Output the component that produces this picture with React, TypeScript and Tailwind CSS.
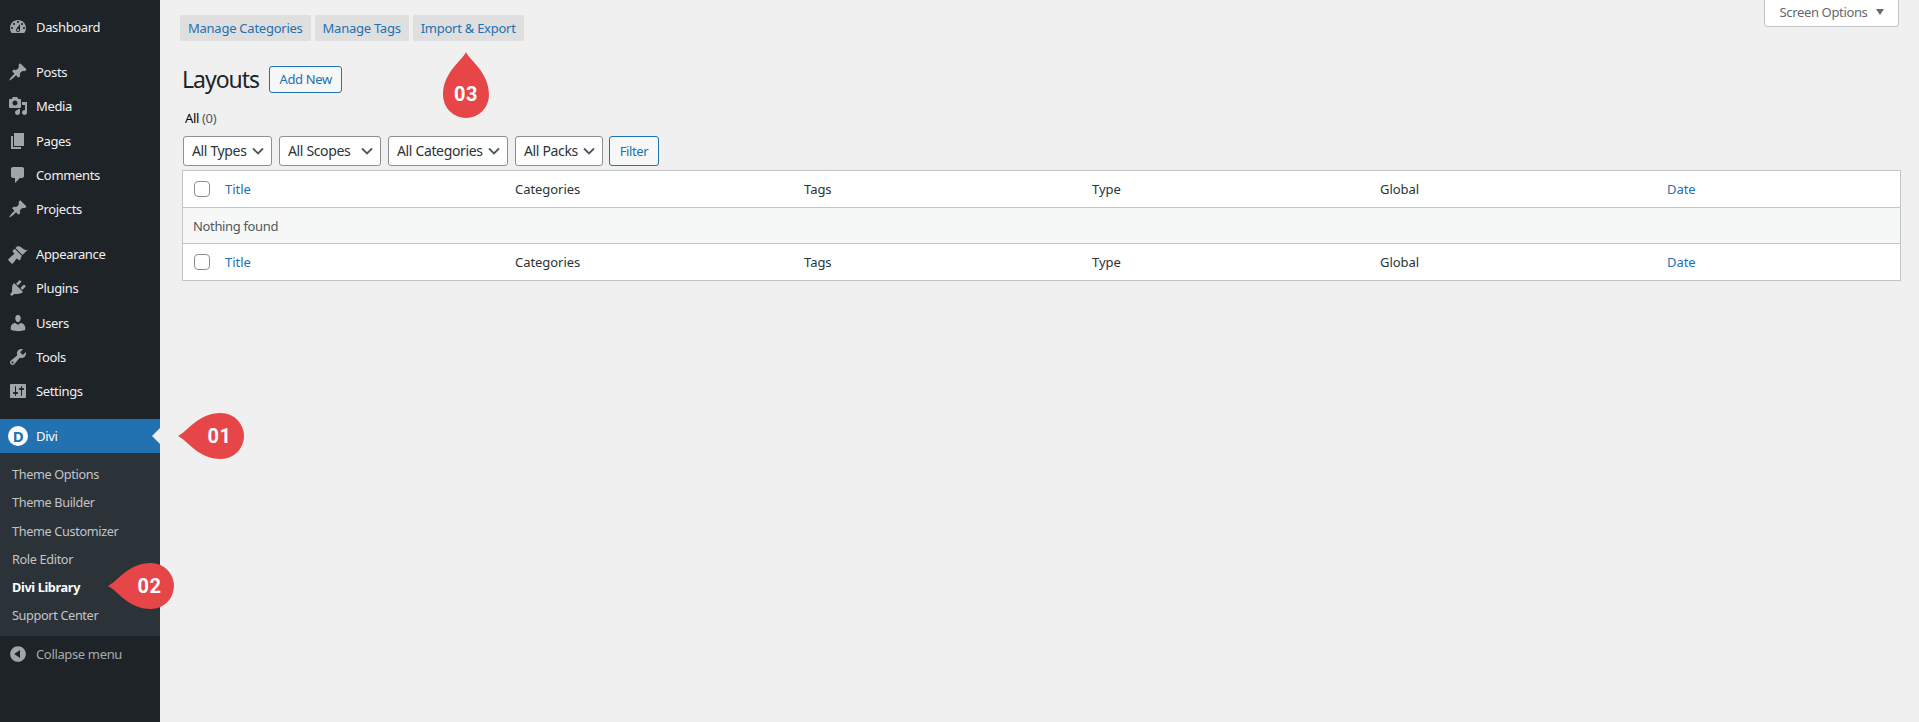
import React from "react";

const P: Record<string, string> = {
  dashboard: "M3.76 16h12.48c1.1-1.37 1.76-3.11 1.76-5 0-4.42-3.58-8-8-8s-8 3.58-8 8c0 1.89.66 3.63 1.76 5zM10 4c.55 0 1 .45 1 1s-.45 1-1 1-1-.45-1-1 .45-1 1-1zM6 6c.55 0 1 .45 1 1s-.45 1-1 1-1-.45-1-1 .45-1 1-1zm8 0c.55 0 1 .45 1 1s-.45 1-1 1-1-.45-1-1 .45-1 1-1zm-5.37 5.55L12 7v6c0 1.1-.9 2-2 2s-2-.9-2-2c0-.57.24-1.08.63-1.45zM4 10c.55 0 1 .45 1 1s-.45 1-1 1-1-.45-1-1 .45-1 1-1zm12 0c.55 0 1 .45 1 1s-.45 1-1 1-1-.45-1-1 .45-1 1-1zm-5 3c0-.55-.45-1-1-1s-1 .45-1 1 .45 1 1 1 1-.45 1-1z",
  post: "M10.44 3.02l1.82-1.82 6.36 6.35-1.83 1.82c-1.05-.68-2.48-.57-3.41.36l-.75.75c-.92.93-1.04 2.35-.35 3.41l-1.83 1.82-2.41-2.41-2.8 2.79c-.42.42-3.38 2.71-3.8 2.29s1.86-3.39 2.28-3.81l2.79-2.79L4.1 9.36l1.83-1.82c1.05.69 2.48.57 3.4-.36l.75-.75c.93-.92 1.05-2.35.36-3.41z",
  media: "M13 11V4c0-.55-.45-1-1-1h-1.67L9 1H5L3.67 3H2c-.55 0-1 .45-1 1v7c0 .55.45 1 1 1h10c.55 0 1-.45 1-1zM7 4.5c1.38 0 2.5 1.12 2.5 2.5S8.38 9.5 7 9.5 4.5 8.38 4.5 7 5.62 4.5 7 4.5zM14 6h5v10.5c0 1.38-1.12 2.5-2.5 2.5S14 17.88 14 16.5s1.12-2.5 2.5-2.5c.17 0 .34.02.5.05V9h-3V6zm-4 8.05V13h2v3.5c0 1.38-1.12 2.5-2.5 2.5S7 17.88 7 16.5 8.12 14 9.5 14c.17 0 .34.02.5.05z",
  page: "M6 15V2h10v13H6zm-1 1h8v2H3V5h2v11z",
  comments: "M5 2h9c1.1 0 2 .9 2 2v7c0 1.1-.9 2-2 2h-2l-5 5v-5H5c-1.1 0-2-.9-2-2V4c0-1.1.9-2 2-2z",
  appearance: "M14.48 11.06L7.41 3.99l1.5-1.5c.5-.56 2.3-.47 3.51.32 1.21.8 1.43 1.28 2.91 2.1 1.18.64 2.45 1.26 4.45.85zm-.71.71L6.7 4.7 4.93 6.47c-.39.39-.39 1.02 0 1.41l1.06 1.06c.39.39.39 1.03 0 1.42-.6.6-1.43 1.11-2.21 1.69-.35.26-.7.53-1.01.84C1.43 13.23 0 15.98 0 15.98 1.48 17.45 4.14 20 4.14 20c.36-.36 1.56-1.6 2.42-2.8.6-.79 1.11-1.62 1.71-2.22.39-.39 1.02-.39 1.41 0l1.06 1.06c.39.39 1.03.39 1.42 0z",
  plugins: "M13.11 4.36L9.87 7.6 8 5.73l3.24-3.24c.35-.34 1.05-.2 1.56.32.52.51.66 1.21.31 1.55zm-8 1.77l.91-1.12 9.01 9.01-1.19.84c-.71.71-2.63 1.16-3.82 1.16H6.14L4.9 17.26c-.59.59-1.54.59-2.12 0-.59-.58-.59-1.53 0-2.12l1.24-1.24v-3.88c0-1.13.4-3.19 1.09-3.89zm7.26 3.97l3.24-3.24c.34-.35 1.04-.21 1.55.31.52.51.66 1.21.31 1.55l-3.24 3.25z",
  users: "M10 9.25c-2.27 0-2.73-3.44-2.73-3.44C7 4.02 7.82 2 9.97 2c2.16 0 2.98 2.02 2.71 3.81 0 0-.41 3.44-2.68 3.44zm0 2.57L12.72 10c2.39 0 4.52 2.33 4.52 4.53v2.49s-3.65 1.13-7.24 1.13c-3.65 0-7.24-1.13-7.24-1.13v-2.49c0-2.25 1.94-4.48 4.47-4.48z",
  tools: "M16.68 9.77c-1.34 1.34-3.3 1.67-4.95.99l-5.41 6.52c-.99.99-2.59.99-3.58 0s-.99-2.59 0-3.57l6.52-5.42c-.68-1.65-.35-3.61.99-4.95 1.28-1.28 3.12-1.62 4.72-1.06l-2.89 2.89 2.82 2.82 2.86-2.87c.53 1.58.18 3.39-1.08 4.65zM3.81 16.21c.4.39 1.04.39 1.43 0 .4-.4.4-1.04 0-1.43-.39-.4-1.03-.4-1.43 0-.39.39-.39 1.03 0 1.43z",
  settings: "M18 16V4c0-.55-.45-1-1-1H3c-.55 0-1 .45-1 1v12c0 .55.45 1 1 1h14c.55 0 1-.45 1-1zM8 11h1c.55 0 1 .45 1 1s-.45 1-1 1H8v1.5c0 .28-.22.5-.5.5s-.5-.22-.5-.5V13H6c-.55 0-1-.45-1-1s.45-1 1-1h1V5.5c0-.28.22-.5.5-.5s.5.22.5.5V11zm5-2h-1c-.55 0-1-.45-1-1s.45-1 1-1h1V5.5c0-.28.22-.5.5-.5s.5.22.5.5V7h1c.55 0 1 .45 1 1s-.45 1-1 1h-1v5.5c0 .28-.22.5-.5.5s-.5-.22-.5-.5V9z",
  collapse: "M10 2.16c4.33 0 7.84 3.51 7.84 7.84s-3.51 7.84-7.84 7.84S2.16 14.33 2.16 10 5.71 2.16 10 2.16zm2 11.72V6.12L6.18 9.97z",
};

function Dashicon({ name }: { name: string }) {
  return (
    <svg viewBox="0 0 20 20" className="w-5 h-5 fill-[#a0a5aa] shrink-0" fillRule="evenodd">
      <path d={P[name]} />
    </svg>
  );
}

function Item({ icon, label }: { icon: string; label: string }) {
  return (
    <div className="h-[34.2px] flex items-center pl-2 gap-2 text-[#f0f0f1]">
      <Dashicon name={icon} />
      <span>{label}</span>
    </div>
  );
}

function Chevron() {
  return (
    <svg viewBox="0 0 16 16" className="w-4 h-4 shrink-0" fill="none" stroke="#50575e" strokeWidth="1.8">
      <path d="M3 5.5l5 5 5-5" />
    </svg>
  );
}

function Select({ label, w }: { label: string; w: string }) {
  return (
    <div className={`${w} h-[30px] bg-white border border-[#8c8f94] rounded-[3px] flex items-center justify-between pl-2 pr-[5px] text-[14px] text-[#2c3338]`}>
      <span>{label}</span>
      <Chevron />
    </div>
  );
}

function Checkbox() {
  return <div className="w-4 h-4 bg-white border border-[#8c8f94] rounded-[4px]" />;
}

function HeadRow({ border }: { border: string }) {
  return (
    <div className={`grid grid-cols-[42px_290px_289px_288px_288px_287px_1fr] items-center bg-white tracking-[-0.05px] ${border}`}>
      <div className="pl-[11px]"><Checkbox /></div>
      <span className="text-[#2271b1]">Title</span>
      <span className="text-[#2c3338]">Categories</span>
      <span className="text-[#2c3338]">Tags</span>
      <span className="text-[#2c3338]">Type</span>
      <span className="text-[#2c3338]">Global</span>
      <span className="text-[#2271b1]">Date</span>
    </div>
  );
}

function Badge({ text, className, up }: { text: string; className: string; up?: boolean }) {
  return (
    <div className={`absolute w-[66px] h-[46px] flex items-center justify-center ${className}`}>
      <svg viewBox="0 0 66 46" className={`absolute inset-0 w-[66px] h-[46px] fill-[#e64647] ${up ? "rotate-90" : ""}`}>
        <path d="M0 23C9 19 20 0 43 0a23 23 0 0 1 0 46C20 46 9 27 0 23Z" />
      </svg>
      <span className={`relative font-bold text-white text-[20px] tracking-[0.6px] font-['Roboto',sans-serif] ${up ? "pt-[18px]" : "pl-[17px]"}`}>{text}</span>
    </div>
  );
}

export default function App() {
  return (
    <div className="relative flex h-[722px] overflow-hidden bg-[#f0f0f0] text-[13px] leading-[18px] font-['Noto_Sans',sans-serif] tracking-[-0.35px]">
      <aside className="w-[160px] shrink-0 bg-[#1d2327] pt-[10px] flex flex-col">
        <Item icon="dashboard" label="Dashboard" />
        <div className="h-[11px]" />
        <Item icon="post" label="Posts" />
        <Item icon="media" label="Media" />
        <Item icon="page" label="Pages" />
        <Item icon="comments" label="Comments" />
        <Item icon="post" label="Projects" />
        <div className="h-[11px]" />
        <Item icon="appearance" label="Appearance" />
        <Item icon="plugins" label="Plugins" />
        <Item icon="users" label="Users" />
        <Item icon="tools" label="Tools" />
        <Item icon="settings" label="Settings" />
        <div className="h-[11px]" />
        <div className="relative h-[34px] bg-[#2271b1] flex items-center pl-2 gap-2 text-white">
          <div className="w-5 h-5 rounded-full bg-white text-[#2271b1] font-bold text-[15px] flex items-center justify-center">D</div>
          <span>Divi</span>
          <div className="absolute right-0 top-[9px] w-0 h-0 border-y-[8px] border-y-transparent border-r-[8px] border-r-[#f0f0f0]" />
        </div>
        <div className="bg-[#2c3338] pt-[7px] pb-[7px] pl-3 text-[#c3c4c7] text-[12.7px]">
          <div className="h-[28.2px] flex items-center">Theme Options</div>
          <div className="h-[28.2px] flex items-center">Theme Builder</div>
          <div className="h-[28.2px] flex items-center">Theme Customizer</div>
          <div className="h-[28.2px] flex items-center">Role Editor</div>
          <div className="h-[28.2px] flex items-center font-bold text-white">Divi Library</div>
          <div className="h-[28.2px] flex items-center">Support Center</div>
        </div>
        <div className="h-[36px] flex items-center pl-2 gap-2 text-[#a7aaad]">
          <Dashicon name="collapse" />
          <span>Collapse menu</span>
        </div>
      </aside>

      <main className="flex-1 min-w-0 pl-[20px] pr-[18px]">
        <div className="flex justify-between items-start">
          <div className="flex gap-1 pt-[15px] text-[#2271b1] tracking-[-0.25px]">
            <div className="h-[26px] px-2 flex items-center bg-[#dfdfdf] rounded-[2px]">Manage Categories</div>
            <div className="h-[26px] px-2 flex items-center bg-[#dfdfdf] rounded-[2px]">Manage Tags</div>
            <div className="h-[26px] px-2 flex items-center bg-[#dfdfdf] rounded-[2px]">Import &amp; Export</div>
          </div>
          <div className="h-[27px] w-[135px] mr-[2px] pb-[3px] bg-white border border-t-0 border-[#c3c4c7] rounded-b-[4px] flex items-center justify-center gap-2 text-[#646970]">
            <span>Screen Options</span>
            <span className="w-0 h-0 border-x-[4px] border-x-transparent border-t-[6px] border-t-[#646970]" />
          </div>
        </div>

        <div className="flex items-center mt-[24px] ml-[2px] gap-[10px] h-[28px]">
          <h1 className="text-[23px] leading-[28px] text-[#1d2327] tracking-[-1px]">Layouts</h1>
          <div className="w-[73px] h-[27px] border border-[#2271b1] rounded-[3px] bg-[#f6f7f7] text-[#2271b1] flex items-center justify-center">Add New</div>
        </div>

        <div className="mt-[16px] ml-[5px] h-[18px] text-black">
          All <span className="text-[#50575e]">(0)</span>
        </div>

        <div className="flex mt-[9px] ml-[3px] h-[30px]">
          <div className="flex gap-[7px] mr-[6px]">
            <Select label="All Types" w="w-[89px]" />
            <Select label="All Scopes" w="w-[102px]" />
            <Select label="All Categories" w="w-[120px]" />
            <Select label="All Packs" w="w-[88px]" />
          </div>
          <div className="w-[50px] h-[30px] border border-[#2271b1] rounded-[3px] bg-[#f6f7f7] text-[#2271b1] flex items-center justify-center">Filter</div>
        </div>

        <div className="mt-[4px] ml-[2px] border border-[#c3c4c7] bg-white">
          <HeadRow border="h-[37px] border-b border-[#c3c4c7]" />
          <div className="h-[36px] pl-[10px] flex items-center bg-[#f6f7f7] text-[#50575e] border-b border-[#c3c4c7]">Nothing found</div>
          <HeadRow border="h-[36px]" />
        </div>
      </main>

      <Badge text="01" className="left-[178px] top-[413px]" />
      <Badge text="02" className="left-[108px] top-[563px]" />
      <Badge text="03" className="left-[433px] top-[62px]" up />
    </div>
  );
}
